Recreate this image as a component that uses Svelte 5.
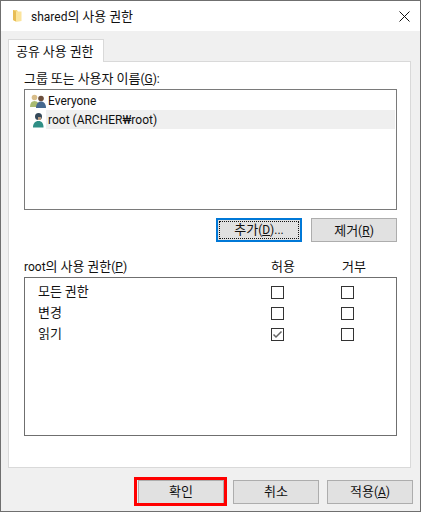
<script lang="ts">
  const users = [
    { name: 'Everyone', group: true, selected: false },
    { name: 'root (ARCHER₩root)', group: false, selected: true }
  ];

  const perms = [
    { name: '모든 권한', allow: false, deny: false },
    { name: '변경', allow: false, deny: false },
    { name: '읽기', allow: true, deny: false }
  ];
</script>

<div class="dialog">
  <header class="titlebar">
    <svg class="folder" width="10" height="13" viewBox="0 0 10 13">
      <path d="M1 1h4l1 2h3v9l-5 0.5-3-1.5z" fill="#f5d77e" />
      <path d="M1 1l3 1.5v10L1 11z" fill="#e8bd55" />
      <path d="M4 2.5h5.500V12L4 12.500z" fill="#fbe49c" />
    </svg>
    <span class="title"><span class="lt">shared</span>의 사용 권한</span>
    <svg class="close" width="11" height="11" viewBox="0 0 11 11">
      <path d="M0.500 0.500l10 10M10.500 0.500l-10 10" stroke="#111" stroke-width="1" fill="none" />
    </svg>
  </header>

  <div class="body">
    <div class="tab">공유 사용 권한</div>
    <section class="page">
      <div class="label">그룹 또는 사용자 이름<span class="lt">(<u>G</u>):</span></div>
      <ul class="userlist">
        {#each users as u}
          <li class="user">
            <svg class="uicon" width="16" height="16" viewBox="0 0 16 16">
              {#if u.group}
                <circle cx="4.500" cy="4.500" r="2.800" fill="#d8bd8a" />
                <path d="M0 14c0-4 1.500-6 4.500-6S9 10 9 14z" fill="#a9bb72" />
                <circle cx="11" cy="5.500" r="2.800" fill="#6d4f3c" />
                <path d="M6 15c0-4 2-6.500 5-6.500s5 2.500 5 6.500z" fill="#46698f" />
              {:else}
                <circle cx="8.500" cy="4.500" r="3.500" fill="#34495a" />
                <path d="M8 5h3v3H8z" fill="#b99a80" />
                <path d="M3 15.500c0-4 2-6.500 5.500-6.500s5 2.500 5 6.500z" fill="#2f8f86" />
              {/if}
            </svg>
            <span class="uname lt" class:selected={u.selected}>{u.name}</span>
          </li>
        {/each}
      </ul>

      <div class="actions">
        <button class="btn focused"><span class="focusring">추가<span class="lt">(<u>D</u>)...</span></span></button>
        <button class="btn">제거<span class="lt">(<u>R</u>)</span></button>
      </div>

      <div class="permhead">
        <span class="permtitle"><span class="lt">root</span>의 사용 권한<span class="lt">(<u>P</u>)</span></span>
        <span class="col">허용</span>
        <span class="col">거부</span>
      </div>
      <div class="permlist">
        {#each perms as p}
          <div class="perm">
            <span class="pname">{p.name}</span>
            <span class="check">
              {#if p.allow}
                <svg width="11" height="11" viewBox="0 0 11 11">
                  <path d="M1.500 5.500l2.500 2.500 5.500-5.500" stroke="#666" stroke-width="1.500" fill="none" />
                </svg>
              {/if}
            </span>
            <span class="check"></span>
          </div>
        {/each}
      </div>
    </section>

    <footer class="footer">
      <div class="okwrap">
        <button class="btn ok">확인</button>
        <span class="redbox"></span>
      </div>
      <button class="btn ok">취소</button>
      <button class="btn ok">적용<span class="lt">(<u>A</u>)</span></button>
    </footer>
  </div>
</div>

<style>
  :global(body) {
    margin: 0;
  }

  .dialog {
    box-sizing: border-box;
    width: 421px;
    height: 512px;
    display: flex;
    flex-direction: column;
    border: 1px solid #6f6f6f;
    font-family: "Noto Sans CJK KR", sans-serif;
    font-size: 13px;
    color: #111;
    background: #f0f0f0;
  }

  .lt {
    font-family: Roboto, "Noto Sans CJK KR", sans-serif;
    font-size: 12px;
  }

  .titlebar {
    box-sizing: border-box;
    height: 30px;
    flex: none;
    display: flex;
    align-items: center;
    background: #fff;
    padding: 0 10px 2px 11px;
  }

  .title {
    margin-left: 9px;
    flex: 1;
  }

  .close {
    margin-top: 2px;
  }

  .body {
    flex: 1;
    display: flex;
    flex-direction: column;
    padding: 8px 7px 0;
    min-height: 0;
  }

  .tab {
    box-sizing: border-box;
    width: 96px;
    height: 23px;
    margin-bottom: -1px;
    position: relative;
    z-index: 1;
    background: #fff;
    border: 1px solid #d9d9d9;
    border-bottom: none;
    padding: 1px 0 0 7px;
  }

  .page {
    box-sizing: border-box;
    width: 403px;
    height: 407px;
    background: #fff;
    border: 1px solid #d9d9d9;
    padding: 7px 13px 0 15px;
  }

  .label {
    height: 20px;
    line-height: 18px;
  }

  .userlist {
    box-sizing: border-box;
    list-style: none;
    height: 121px;
    margin: 0;
    padding: 1px;
    border: 1px solid #7a7a7a;
  }

  .user {
    display: flex;
    align-items: center;
    height: 19px;
    padding-left: 4px;
  }

  .uicon {
    flex: none;
  }

  .uname {
    flex: 1;
    height: 19px;
    line-height: 21px;
    padding-left: 2px;
  }

  .selected {
    background: #efefef;
  }

  .actions {
    display: flex;
    justify-content: flex-end;
    gap: 9px;
    margin-top: 8px;
  }

  .btn {
    box-sizing: border-box;
    width: 86px;
    height: 24px;
    padding: 0 0 2px;
    font: inherit;
    color: inherit;
    background: #e1e1e1;
    border: 1px solid #adadad;
  }

  .ok {
    padding-bottom: 4px;
  }

  .focused {
    border: 2px solid #0078d7;
    padding: 1px;
  }

  .focusring {
    display: block;
    box-sizing: border-box;
    height: 100%;
    line-height: 14px;
    border: 1px dotted #111;
  }

  .permhead {
    display: grid;
    grid-template-columns: 247px 71px 1fr;
    margin-top: 14px;
    height: 21px;
    line-height: 20px;
  }

  .permlist {
    box-sizing: border-box;
    height: 159px;
    border: 1px solid #6f6f6f;
    padding-top: 4px;
  }

  .perm {
    display: grid;
    grid-template-columns: 246px 70px 1fr;
    align-items: center;
    height: 21px;
  }

  .pname {
    padding-left: 13px;
    margin-top: -4px;
  }

  .check {
    box-sizing: border-box;
    display: flex;
    align-items: center;
    justify-content: center;
    width: 13px;
    height: 13px;
    border: 1px solid #333;
  }

  .footer {
    display: flex;
    justify-content: flex-end;
    gap: 8px;
    margin-top: 12px;
  }

  .okwrap {
    position: relative;
    display: flex;
    margin-right: 1px;
  }

  .redbox {
    position: absolute;
    inset: -3px -3px -2px -4px;
    border: 3px solid #f00;
    pointer-events: none;
  }
</style>
